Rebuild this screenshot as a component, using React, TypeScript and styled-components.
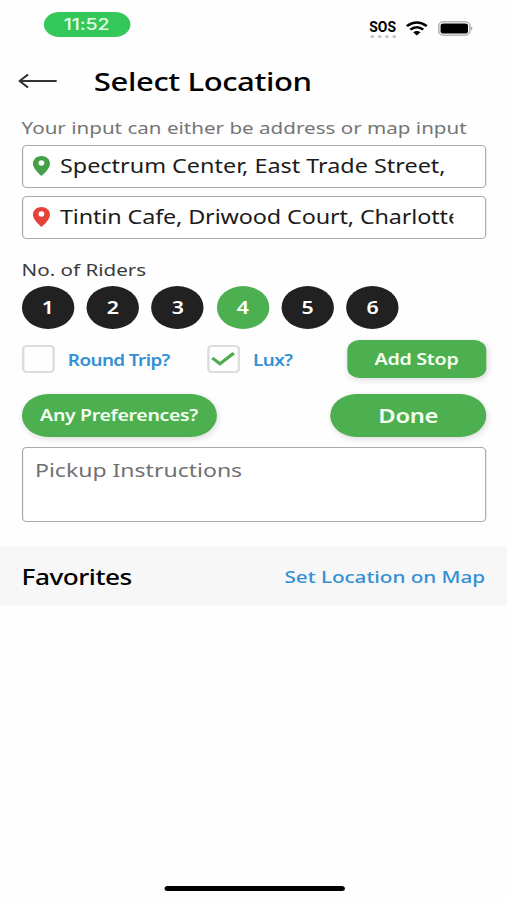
import React from 'react';
import styled, { createGlobalStyle } from 'styled-components';

const GREEN = '#4caf50';
const BLUE = '#3490d4';

const GlobalStyle = createGlobalStyle`
  *, *::before, *::after { box-sizing: border-box; }
  html, body { margin: 0; background: #fff; overflow: hidden; }
  button { border: 0; padding: 0; margin: 0; font: inherit; background: none; }
`;

const Viewport = styled.div`
  width: 507px;
  height: 900px;
  overflow: hidden;
  background: #fefefe;
`;

/* The phone screen is 416 units wide and stretched to the window's width. */
const Screen = styled.main`
  width: 416px;
  height: 900px;
  display: flex;
  flex-direction: column;
  transform: scaleX(1.21875);
  transform-origin: 0 0;
  font-family: 'Noto Sans', 'Open Sans', sans-serif;
  color: #000;
`;

const StatusBar = styled.header`
  height: 54px;
  padding: 12px 27px 0 35.5px;
  display: flex;
  justify-content: space-between;
  align-items: flex-start;
`;

const Clock = styled.div`
  width: 71px;
  height: 24.5px;
  border-radius: 13px;
  background: #34c759;
  color: #e4ffe6;
  font: 500 16px/25px Inter, sans-serif;
  letter-spacing: -0.1px;
  text-align: center;
`;

const StatusIcons = styled.div`
  display: flex;
  height: 32px;
  align-items: center;
`;

const Sos = styled.div`
  width: 23px;
  margin-right: 7px;
  padding-top: 1px;
  font: 700 15px/14px Roboto, sans-serif;
`;

const SosText = styled.div`
  transform: scaleX(0.76);
  transform-origin: 0 0;
`;

const Dots = styled.div`
  display: flex;
  justify-content: space-between;
  padding: 0 1px;
  margin-top: 1px;
  i { width: 3px; height: 3px; border-radius: 50%; background: #c4c4c4; }
`;

const TitleBar = styled.div`
  height: 54px;
  padding-left: 15px;
  display: flex;
  align-items: center;
`;

const BackButton = styled.button`
  width: 62px;
  height: 24px;
  display: flex;
  align-items: center;
`;

const Title = styled.h1`
  margin: 0;
  font-size: 25.5px;
  line-height: 36px;
  font-weight: 500;
  letter-spacing: -0.33px;
  white-space: nowrap;
`;

const Form = styled.section`
  padding: 0 17px 0 17.7px;
  height: 438px;
  display: flex;
  flex-direction: column;
`;

const Hint = styled.p`
  margin: 7px 0 4.5px;
  font-size: 16.9px;
  line-height: 25px;
  color: #757575;
  white-space: nowrap;
`;

const Field = styled.div`
  height: 43px;
  flex: none;
  margin-bottom: 8px;
  border: 1px solid #aaa;
  border-radius: 4px;
  display: flex;
  align-items: center;
  padding: 0 26px 0 8px;
  background: #fff;
`;

const FieldText = styled.span<{ $tracking?: number }>`
  flex: 1;
  margin-left: 8.5px;
  overflow: hidden;
  white-space: nowrap;
  font-size: 19.2px;
  letter-spacing: ${(p) => p.$tracking ?? 0}px;
  line-height: 30px;
  padding-bottom: 1px;
  color: #1c1c1c;
`;

const Label = styled.div`
  margin-top: 8px;
  font-size: 16.9px;
  line-height: 24px;
  height: 28px;
  padding-top: 3.5px;
  color: #3b3b3b;
`;

const Riders = styled.div`
  display: flex;
  gap: 10.33px;
  margin-top: 3.5px;
`;

const Rider = styled.button<{ $active: boolean }>`
  width: 43px;
  height: 43px;
  border-radius: 50%;
  background: ${(p) => (p.$active ? GREEN : '#212121')};
  color: #fff;
  font-size: 17.5px;
  font-weight: 600;
  line-height: 43px;
  text-align: center;
`;

const Row = styled.div<{ $top: number; $height: number }>`
  display: flex;
  align-items: center;
  margin-top: ${(p) => p.$top}px;
  height: ${(p) => p.$height}px;
`;

const Check = styled.span`
  width: 27px;
  height: 28px;
  border: 2px solid #ddd;
  border-radius: 4px;
  display: flex;
  align-items: center;
  justify-content: center;
`;

const CheckLabel = styled.span<{ $width: number }>`
  width: ${(p) => p.$width}px;
  margin-left: 11px;
  padding-top: 1px;
  color: ${BLUE};
  font-size: 15.5px;
  font-weight: 600;
  letter-spacing: -0.5px;
  white-space: nowrap;
`;

const Button = styled.button<{ $width: number; $height: number; $radius: number; $size: number }>`
  width: ${(p) => p.$width}px;
  height: ${(p) => p.$height}px;
  border-radius: ${(p) => p.$radius}px;
  font-size: ${(p) => p.$size}px;
  line-height: ${(p) => p.$height}px;
  margin-left: auto;
  &:first-child { margin-left: 0; }
  background: ${GREEN};
  color: #f4fff0;
  font-weight: 600;
  letter-spacing: -0.27px;
  white-space: nowrap;
  box-shadow: 1px 2px 6px rgba(0, 0, 0, 0.14);
`;

const Instructions = styled.div`
  height: 75px;
  margin-top: 10px;
  border: 1px solid #aaa;
  border-radius: 4px;
  padding: 8px 10px;
  font-size: 18.9px;
  line-height: 28px;
  color: #707070;
  background: #fff;
`;

const Favorites = styled.section`
  height: 60px;
  background: #f7f7f7;
  padding: 0 18px 0 17.7px;
  display: flex;
  align-items: center;
  justify-content: space-between;
`;

const SectionTitle = styled.h2`
  margin: 0;
  font-size: 21.5px;
  font-weight: 500;
  letter-spacing: -0.4px;
`;

const MapLink = styled.button`
  color: ${BLUE};
  font-size: 17px;
  font-weight: 500;
  letter-spacing: -0.05px;
  white-space: nowrap;
`;

const HomeIndicator = styled.div`
  width: 148px;
  height: 5px;
  margin: auto auto 9px 134.5px;
  border-radius: 3px;
  background: #000;
`;

const Wifi = styled.svg`
  margin: 0 8px 0 0;
`;

const Pin = ({ color }: { color: string }) => (
  <svg width="14" height="20" viewBox="0 0 16 20" preserveAspectRatio="none">
    <path
      d="M8 0C3.500 0 0 3.400 0 7.700C0 13 8 20 8 20S16 13 16 7.700C16 3.400 12.500 0 8 0Z"
      fill={color}
    />
    <circle cx="8" cy="7" r="2.700" fill="#fff" />
  </svg>
);

export default function App() {
  return (
    <Viewport>
      <GlobalStyle />
      <Screen>
        <StatusBar>
          <Clock>11:52</Clock>
          <StatusIcons>
            <Sos>
              <SosText>SOS</SosText>
              <Dots><i /><i /><i /><i /></Dots>
            </Sos>
            <Wifi width="18" height="15" viewBox="0 0 18 15">
              <g fill="none" stroke="#000" strokeWidth="2.400">
                <path d="M0.800 5.200Q9 -2 17.200 5.200" />
                <path d="M3.700 8.600Q9 4 14.300 8.600" />
              </g>
              <path d="M6 11.200Q9 8.600 12 11.200L9 14.400Z" />
            </Wifi>
            <svg width="30" height="15" viewBox="0 0 30 15">
              <rect x="1" y="0.800" width="25.500" height="13.400" rx="4" fill="#fff" stroke="#b5b5b5" strokeWidth="1.400" />
              <rect x="2.500" y="2.400" width="22.500" height="10.200" rx="2.400" />
              <path d="M27.600 5.500Q29.600 7.500 27.600 9.500Z" fill="#999" />
            </svg>
          </StatusIcons>
        </StatusBar>

        <TitleBar>
          <BackButton aria-label="Back">
            <svg width="32" height="18" viewBox="0 0 32 18" fill="none" stroke="#333" strokeWidth="1.800">
              <path d="M1 9H31.500M8 2.500L1 9L8 15.500" />
            </svg>
          </BackButton>
          <Title>Select Location</Title>
        </TitleBar>

        <Form>
          <Hint>Your input can either be address or map input</Hint>
          <Field>
            <Pin color="#43a047" />
            <FieldText>Spectrum Center, East Trade Street,</FieldText>
          </Field>
          <Field>
            <Pin color="#e5433a" />
            <FieldText $tracking={-0.11}>Tintin Cafe, Driwood Court, Charlotte</FieldText>
          </Field>
          <Label>No. of Riders</Label>
          <Riders>
            {[1, 2, 3, 4, 5, 6].map((n) => (
              <Rider key={n} $active={n === 4}>{n}</Rider>
            ))}
          </Riders>
          <Row $top={11} $height={38}>
            <Check />
            <CheckLabel $width={114}>Round Trip?</CheckLabel>
            <Check>
              <svg width="20" height="14" viewBox="0 0 20 14" fill="none" stroke={GREEN} strokeWidth="3">
                <path d="M1.200 6L7.500 11.800L18.800 1.200" />
              </svg>
            </Check>
            <CheckLabel $width={40}>Lux?</CheckLabel>
            <Button $width={114.5} $height={38} $radius={10} $size={16.2}>Add Stop</Button>
          </Row>
          <Row $top={16} $height={43}>
            <Button $width={160} $height={43} $radius={22} $size={16}>Any Preferences?</Button>
            <Button $width={128} $height={43} $radius={22} $size={19.5}>Done</Button>
          </Row>
          <Instructions>Pickup Instructions</Instructions>
        </Form>

        <Favorites>
          <SectionTitle>Favorites</SectionTitle>
          <MapLink>Set Location on Map</MapLink>
        </Favorites>
        <HomeIndicator />
      </Screen>
    </Viewport>
  );
}
